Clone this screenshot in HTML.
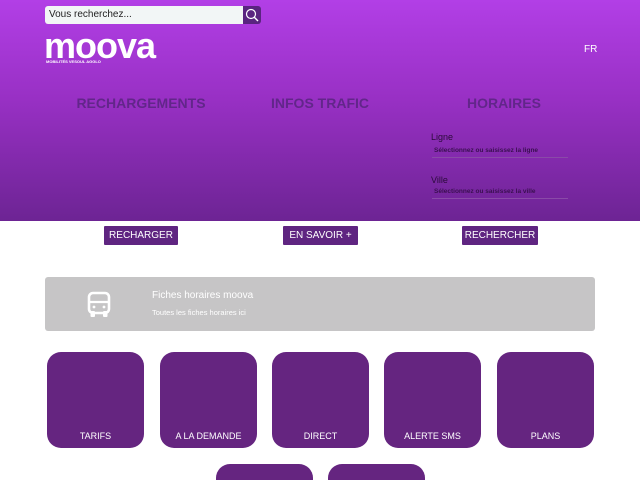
<!DOCTYPE html>
<html><head><meta charset="utf-8"><style>
*{margin:0;padding:0;box-sizing:border-box}
html,body{width:640px;height:480px;overflow:hidden}
body{background:#fff;font-family:"Liberation Sans",sans-serif;position:relative}
.hdr{position:absolute;left:0;top:0;width:640px;height:221px;background:linear-gradient(#b23fe6,#9830c4 45%,#6d2494)}
.search{position:absolute;left:45px;top:6px;width:198px;height:18px;background:#f2f6f6;border-radius:3px 0 0 3px;font-size:10px;line-height:18px;padding-left:4px;color:#222}
.sbtn{position:absolute;left:243px;top:6px;width:18px;height:18px;background:#5a2480;border-radius:0 3px 3px 0}
.logo{position:absolute;left:44px;top:26px;color:#fff;font-weight:bold;font-size:36px;letter-spacing:-1px;line-height:40px}
.tag{position:absolute;left:46px;top:59px;color:#fff;font-size:4px;font-weight:bold}
.fr{position:absolute;left:584px;top:44px;color:#fff;font-size:10px}
.h{position:absolute;top:95px;font-weight:bold;font-size:14px;color:#62268a;width:200px;text-align:center}
.lab{position:absolute;left:431px;font-size:9px;color:#2a0a3a}
.sel{position:absolute;left:432px;width:136px;font-size:6.5px;font-weight:bold;color:#3a1050;border-bottom:1px solid #8a4aa8;padding:2px 0 3px 2px}
.btn{position:absolute;top:226px;height:19px;background:#5f2581;color:#fff;font-size:10px;line-height:19px;text-align:center;border-radius:1px}
.banner{position:absolute;left:45px;top:277px;width:550px;height:54px;background:#c6c5c6;border-radius:3px}
.tile{position:absolute;width:97px;height:96px;background:#652580;border-radius:14px;color:#fff;font-size:9px;text-align:center;padding-top:79px}
.tile2{position:absolute;top:464px;width:97px;height:16px;background:#652580;border-radius:14px 14px 0 0}
</style></head><body>
<div class="hdr"></div>
<div class="search">Vous recherchez...</div>
<div class="sbtn"><svg width="18" height="18"><circle cx="8" cy="8" r="4.5" fill="none" stroke="#fff" stroke-width="1.2"/><line x1="11.3" y1="11.3" x2="15" y2="15" stroke="#fff" stroke-width="1.4"/></svg></div>
<div class="logo">moova</div>
<div class="tag">MOBILITÉS VESOUL AGGLO</div>
<div class="fr">FR</div>
<div class="h" style="left:41px">RECHARGEMENTS</div>
<div class="h" style="left:220px">INFOS TRAFIC</div>
<div class="h" style="left:404px">HORAIRES</div>
<div class="lab" style="top:132px">Ligne</div>
<div class="sel" style="top:145px">Sélectionnez ou saisissez la ligne</div>
<div class="lab" style="top:175px">Ville</div>
<div class="sel" style="top:186px">Sélectionnez ou saisissez la ville</div>
<div class="btn" style="left:104px;width:74px">RECHARGER</div>
<div class="btn" style="left:283px;width:75px">EN SAVOIR +</div>
<div class="btn" style="left:462px;width:76px">RECHERCHER</div>
<div class="banner">
<svg style="position:absolute;left:42px;top:14px" width="24" height="27" viewBox="0 0 24 27"><rect x="2" y="2" width="20" height="20" rx="4" fill="none" stroke="#fff" stroke-width="2.6"/><line x1="2" y1="11" x2="22" y2="11" stroke="#fff" stroke-width="2.2"/><rect x="3.5" y="20" width="4.5" height="6" rx="1" fill="#fff"/><rect x="16" y="20" width="4.5" height="6" rx="1" fill="#fff"/><circle cx="7" cy="16" r="1.4" fill="#fff"/><circle cx="17" cy="16" r="1.4" fill="#fff"/></svg>
<div style="position:absolute;left:107px;top:13px;color:#fff;font-size:10px">Fiches horaires moova</div>
<div style="position:absolute;left:107px;top:31px;color:#fff;font-size:7.5px">Toutes les fiches horaires ici</div>
</div>
<div class="tile" style="left:47px;top:352px">TARIFS</div>
<div class="tile" style="left:160px;top:352px">A LA DEMANDE</div>
<div class="tile" style="left:272px;top:352px">DIRECT</div>
<div class="tile" style="left:384px;top:352px">ALERTE SMS</div>
<div class="tile" style="left:497px;top:352px">PLANS</div>
<div class="tile2" style="left:216px"></div>
<div class="tile2" style="left:328px"></div>
</body></html>
